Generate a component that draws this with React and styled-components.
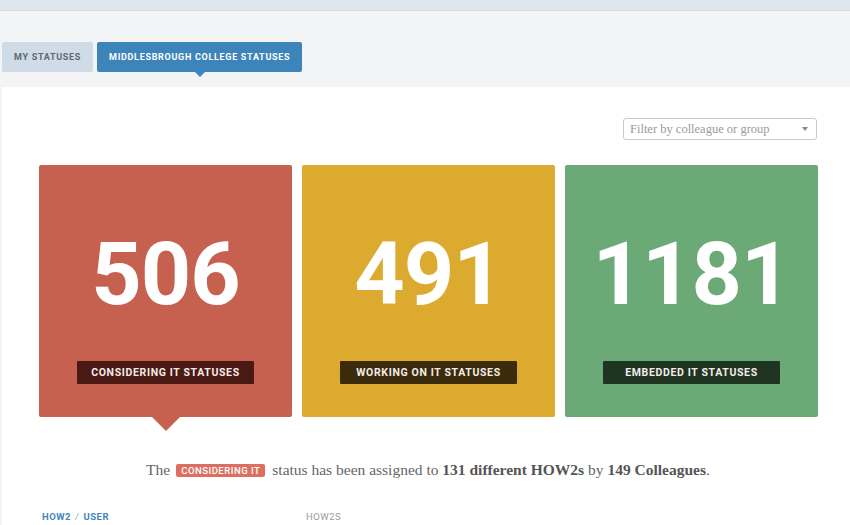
import React from "react";
import styled, { createGlobalStyle } from "styled-components";

const Global = createGlobalStyle`
  html, body { margin: 0; padding: 0; }
  body {
    background: #f3f4f6;
    font-family: "Roboto", "Liberation Sans", sans-serif;
    overflow: hidden;
  }
`;

const TopBar = styled.div`
  height: 10px;
  background: #dce6ec;
  border-bottom: 1px solid #d3dde3;
`;

const Page = styled.div`
  padding: 31px 0 0 2px;
`;

const Tabs = styled.div`
  display: flex;
  gap: 4px;
  margin-bottom: 15px;
`;

const Tab = styled.div`
  position: relative;
  height: 30px;
  display: flex;
  align-items: center;
  padding: 0 12px;
  border-radius: 2px;
  font-size: 9px;
  font-weight: 700;
  letter-spacing: 0.7px;
  background: ${(p) => (p.$active ? "#3d84ba" : "#cfdbe6")};
  color: ${(p) => (p.$active ? "#ffffff" : "#5b6873")};

  &::after {
    content: "";
    display: ${(p) => (p.$active ? "block" : "none")};
    position: absolute;
    left: 50%;
    bottom: -5px;
    margin-left: -5px;
    border-left: 5px solid transparent;
    border-right: 5px solid transparent;
    border-top: 5px solid #3d84ba;
  }
`;

const Panel = styled.div`
  background: #ffffff;
  padding: 31px 33px 0 37px;
  min-height: 420px;
`;

const FilterRow = styled.div`
  display: flex;
  justify-content: flex-end;
  margin-bottom: 25px;
`;

const Select = styled.div`
  width: 194px;
  height: 22px;
  box-sizing: border-box;
  border: 1px solid #c9c9c9;
  border-radius: 3px;
  display: flex;
  align-items: center;
  justify-content: space-between;
  padding: 0 8px 0 6px;
  font-family: "Liberation Serif", serif;
  font-size: 12.5px;
  color: #9a9a9a;
`;

const Caret = styled.span`
  width: 0;
  height: 0;
  border-left: 3.5px solid transparent;
  border-right: 3.5px solid transparent;
  border-top: 4px solid #888;
`;

const Cards = styled.div`
  display: grid;
  grid-template-columns: repeat(3, 253px);
  gap: 10px;
`;

const Card = styled.div`
  position: relative;
  height: 252px;
  background: ${(p) => p.$bg};
  border-radius: 2px;
  display: flex;
  flex-direction: column;
  align-items: center;

  &::after {
    content: "";
    display: ${(p) => (p.$selected ? "block" : "none")};
    position: absolute;
    left: 50%;
    bottom: -14px;
    margin-left: -14px;
    border-left: 14px solid transparent;
    border-right: 14px solid transparent;
    border-top: 14px solid ${(p) => p.$bg};
  }
`;

const Count = styled.div`
  margin-top: 65px;
  height: 88px;
  font-size: 88px;
  line-height: 88px;
  font-weight: 700;
  color: #ffffff;
  letter-spacing: -1px;
`;

const Label = styled.div`
  margin-top: 43px;
  width: 177px;
  height: 23px;
  display: flex;
  align-items: center;
  justify-content: center;
  border-radius: 1px;
  background: ${(p) => p.$bg};
  color: #f4ece8;
  font-size: 10.5px;
  font-weight: 700;
  letter-spacing: 0.65px;
`;

const Sentence = styled.p`
  margin: 44px 0 0;
  text-align: center;
  font-family: "Liberation Serif", serif;
  font-size: 15.5px;
  color: #666;

  b {
    color: #555;
  }
`;

const Pill = styled.span`
  display: inline-block;
  margin: 0 7px 0 6px;
  padding: 1px 5px;
  background: #dc6f61;
  color: #fff;
  border-radius: 2px;
  font-family: "Roboto", sans-serif;
  font-size: 9.5px;
  font-weight: 500;
  letter-spacing: 0.5px;
  vertical-align: 1px;
`;

const TableHead = styled.div`
  display: grid;
  grid-template-columns: 264px 1fr;
  margin-top: 32px;
  padding-left: 3px;
  font-size: 9.5px;
  letter-spacing: 0.5px;
`;

const HeadCell = styled.span`
  color: ${(p) => (p.$blue ? "#3f86bb" : "#999")};
  font-weight: ${(p) => (p.$blue ? 700 : 400)};

  i {
    font-style: normal;
    color: #9aa;
    font-weight: 400;
    margin: 0 4px;
  }
`;

const stats = [
  { n: "506", label: "CONSIDERING IT STATUSES", bg: "#c66150", dark: "#4a1914", selected: true },
  { n: "491", label: "WORKING ON IT STATUSES", bg: "#dbaa2e", dark: "#3b2b0b" },
  { n: "1181", label: "EMBEDDED IT STATUSES", bg: "#6ba977", dark: "#1f3522" },
];

export default function App() {
  return (
    <>
      <Global />
      <TopBar />
      <Page>
        <Tabs>
          <Tab>MY STATUSES</Tab>
          <Tab $active>MIDDLESBROUGH COLLEGE STATUSES</Tab>
        </Tabs>
        <Panel>
          <FilterRow>
            <Select>
              Filter by colleague or group
              <Caret />
            </Select>
          </FilterRow>
          <Cards>
            {stats.map((s) => (
              <Card key={s.n} $bg={s.bg} $selected={s.selected}>
                <Count>{s.n}</Count>
                <Label $bg={s.dark}>{s.label}</Label>
              </Card>
            ))}
          </Cards>
          <Sentence>
            The<Pill>CONSIDERING IT</Pill>status has been assigned to{" "}
            <b>131 different HOW2s</b> by <b>149 Colleagues</b>.
          </Sentence>
          <TableHead>
            <HeadCell $blue>
              HOW2<i>/</i>USER
            </HeadCell>
            <HeadCell>HOW2S</HeadCell>
          </TableHead>
        </Panel>
      </Page>
    </>
  );
}
